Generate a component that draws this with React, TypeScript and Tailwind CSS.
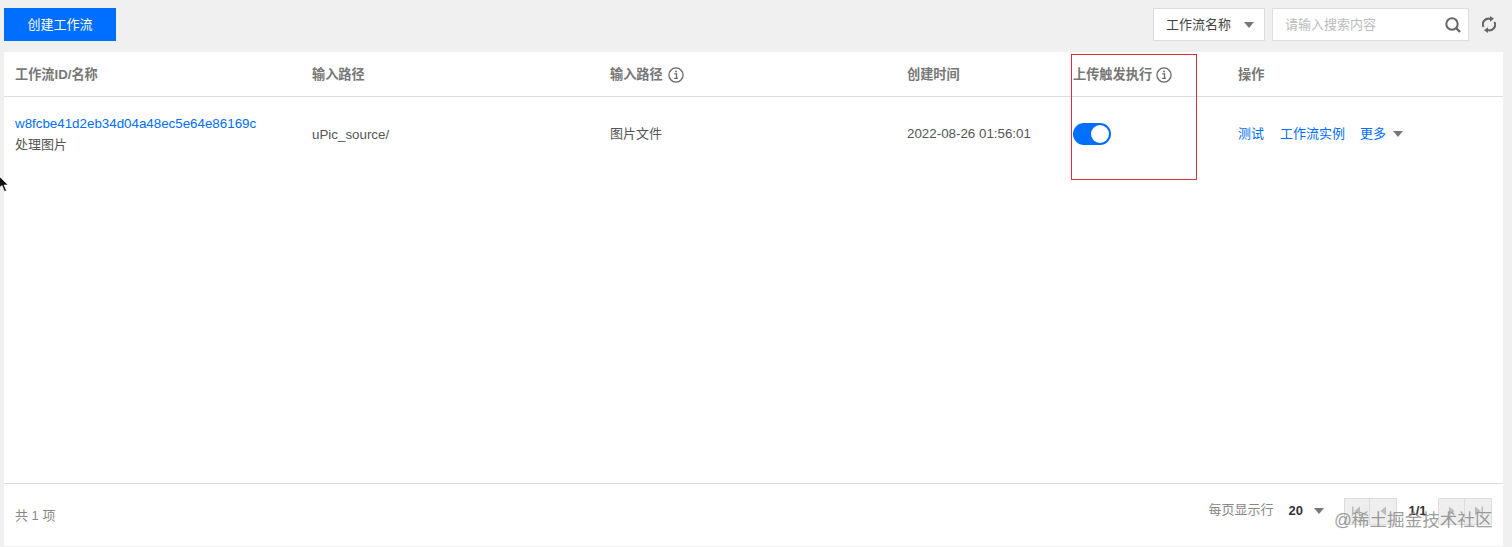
const cjk = "font-['Helvetica_Neue','Liberation_Sans','Noto_Sans_CJK_SC',sans-serif]"
const grid = 'grid grid-cols-[297px_298px_297px_166px_165px_1fr] pl-[11px]'

const Caret = () => (
  <span className="inline-block w-0 h-0 border-x-[5px] border-x-transparent border-t-[6px] border-t-[#777]" />
)

const InfoIcon = () => (
  <svg width="16" height="16" viewBox="0 0 15 15" fill="none" className="shrink-0">
    <circle cx="7.5" cy="7.5" r="6.6" stroke="#666" strokeWidth="1.2" />
    <rect x="6.8" y="3.4" width="1.5" height="1.6" fill="#666" />
    <path d="M5.9 6.5h2.1v4h1.1M5.8 10.6h3.4" stroke="#666" strokeWidth="1.1" />
  </svg>
)

const SearchIcon = () => (
  <svg width="18" height="18" viewBox="0 0 18 18" fill="none">
    <circle cx="8" cy="8" r="5.7" stroke="#666" strokeWidth="2" />
    <path d="M12.2 12.2l3.8 3.8" stroke="#666" strokeWidth="2.4" />
  </svg>
)

const RefreshIcon = () => (
  <svg width="14" height="17" viewBox="0 0 14 17" fill="none">
    <path d="M1.6 11A5.6 5.6 0 0 1 8.8 3.2" stroke="#666" strokeWidth="2" />
    <path d="M8 0l4 2.8-4 3z" fill="#666" />
    <path d="M12.4 6A5.6 5.6 0 0 1 5.2 13.8" stroke="#666" strokeWidth="2" />
    <path d="M6 17l-4-2.8 4-3z" fill="#666" />
  </svg>
)

const PagerIcon = ({ dir, edge }: { dir: 'left' | 'right'; edge?: boolean }) => (
  <svg width="12" height="12" viewBox="0 0 12 12" className={dir === 'right' ? 'rotate-180' : ''}>
    {edge && <rect x="1" y="1.5" width="1.5" height="9" fill="#bbb" />}
    <path d="M9 1.5v9L3.5 6z" fill="#bbb" />
  </svg>
)

const App = () => {
  return (
    <div className={`relative h-[547px] w-[1512px] overflow-hidden bg-[#f0f0f0] text-[13px] text-[#555] ${cjk}`}>
      <div className="h-[52px] flex items-start pt-2 pl-1 pr-[16px]">
        <button className="w-[112px] h-[33px] bg-[#006eff] text-white text-[13px]">创建工作流</button>
        <div className="ml-auto flex items-center">
          <div className="w-[112px] h-[33px] bg-white border border-[#ddd] flex items-center justify-between pl-3 pr-[10px] text-[#444]">
            工作流名称
            <Caret />
          </div>
          <div className="ml-[7px] w-[197px] h-[33px] bg-white border border-[#ddd] flex items-center justify-between pl-3 pr-[6px] text-[#bbb]">
            请输入搜索内容
            <SearchIcon />
          </div>
          <div className="ml-[13px]">
            <RefreshIcon />
          </div>
        </div>
      </div>

      <div className="ml-1 mr-[9px] h-[494px] bg-white flex flex-col">
        <div className={`${grid} h-[45px] items-center border-b border-[#ddd] pt-[2px] font-semibold text-[13.2px] text-[#777]`}>
          <div>工作流ID/名称</div>
          <div>输入路径</div>
          <div className="flex items-center gap-[5px]">
            输入路径
            <InfoIcon />
          </div>
          <div>创建时间</div>
          <div className="flex items-center gap-[4px]">
            上传触发执行
            <InfoIcon />
          </div>
          <div>操作</div>
        </div>

        <div className={`${grid} h-[74px] items-center`}>
          <div className="leading-[21px] pb-[1px]">
            <div className="text-[13.35px] text-[#006eff]">w8fcbe41d2eb34d04a48ec5e64e86169c</div>
            <div>处理图片</div>
          </div>
          <div className="text-[13.35px] pt-[2px]">uPic_source/</div>
          <div className="pb-[1px]">图片文件</div>
          <div className="text-[13.35px]">2022-08-26 01:56:01</div>
          <div>
            <div className="w-[38px] h-[22px] mb-[1px] rounded-full bg-[#006eff] flex items-center justify-end pr-[2px]">
              <span className="w-[18px] h-[18px] rounded-full bg-white" />
            </div>
          </div>
          <div className="flex items-center text-[#006eff]">
            <span>测试</span>
            <span className="ml-[16px]">工作流实例</span>
            <span className="ml-[15px] mr-[7px]">更多</span>
            <Caret />
          </div>
        </div>

        <div className="flex-1" />

        <div className="h-[63px] border-t border-[#ddd] flex items-center justify-between pl-[11px] pr-[11px]">
          <span className="text-[#888] pt-[2px]">共 1 项</span>
          <div className="flex items-center pb-[8px]">
            <span className="text-[#888] pb-[2px]">每页显示行</span>
            <span className="ml-[15px] font-bold text-[#333]">20</span>
            <span className="ml-[11px] mr-[20px] flex">
              <Caret />
            </span>
            <div className="flex h-[27px] items-stretch">
              <div className="w-[26px] bg-[#eee] border border-[#ddd] flex items-center justify-center">
                <PagerIcon dir="left" edge />
              </div>
              <div className="w-[27px] bg-[#eee] border-y border-r border-[#ddd] flex items-center justify-center">
                <PagerIcon dir="left" />
              </div>
              <div className="w-[41px] flex items-center justify-center font-bold text-[#333]">1/1</div>
              <div className="w-[26px] bg-[#eee] border-y border-l border-[#ddd] flex items-center justify-center">
                <PagerIcon dir="right" />
              </div>
              <div className="w-[28px] bg-[#eee] border border-[#ddd] flex items-center justify-center">
                <PagerIcon dir="right" edge />
              </div>
            </div>
          </div>
        </div>
      </div>

      {/* annotation drawn over the screenshot */}
      <div className="absolute left-[1071px] top-[54px] w-[126px] h-[126px] border border-[#d9303a]" />

      {/* site watermark */}
      <div className="absolute left-[1334px] top-[509px] text-[17.6px] leading-[22px] text-[#8a8a8a]/85 whitespace-nowrap">
        @稀土掘金技术社区
      </div>

      {/* mouse cursor */}
      <svg width="10" height="18" viewBox="0 0 10 18" className="absolute left-0 top-[176px]">
        <path d="M-1 0v12l3-2.5 2.5 6 2-1-2.5-5.5H8z" fill="#111" stroke="#fff" strokeWidth="0.6" />
      </svg>
    </div>
  )
}

export default App
